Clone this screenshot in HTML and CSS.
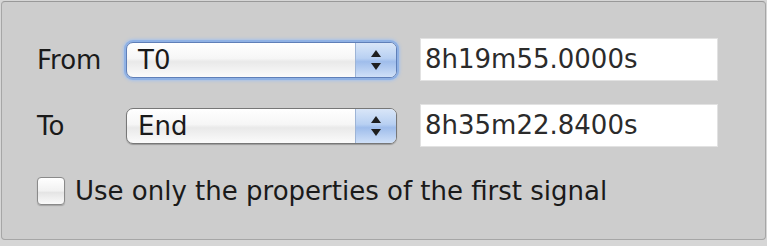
FILE: index.html
```html
<!DOCTYPE html>
<html lang="en">
<head>
  <meta charset="UTF-8">
  <title>Range</title>
  <link rel="stylesheet" href="styles.css">
</head>
<body>

  <div class="panel">
    <div class="fila">
      <span class="etiqueta">From</span>
      <div class="popup foco">
        <span class="valor">T0</span>
        <span class="flechas"><i class="arriba"></i><i class="abajo"></i></span>
      </div>
      <div class="campo">8h19m55.0000s</div>
    </div>

    <div class="fila">
      <span class="etiqueta">To</span>
      <div class="popup">
        <span class="valor">End</span>
        <span class="flechas"><i class="arriba"></i><i class="abajo"></i></span>
      </div>
      <div class="campo">8h35m22.8400s</div>
    </div>

    <label class="opcion">
      <span class="caja"></span>
      Use only the properties of the first signal
    </label>
  </div>

</body>
</html>
```

FILE: styles.css
```css
body {
  margin: 0;
  padding: 0;
  background-color: #d6d6d6;
  font-family: "DejaVu Sans", Verdana, sans-serif;
  font-size: 26px;
  color: #1a1a1a;
}

.panel {
  margin: 1px 1px 3px 1px;
  height: 239px;
  box-sizing: border-box;
  background-color: #cdcdcd;
  border: 1px solid #a6a6a6;
  border-top-color: #999;
  border-radius: 4px;
  padding: 36px 0 0 35px;
}

.fila {
  display: flex;
  align-items: center;
  height: 43px;
  margin-bottom: 23px;
}

.etiqueta {
  width: 89px;
}

.popup {
  width: 271px;
  height: 36px;
  box-sizing: border-box;
  display: flex;
  border: 1px solid #777;
  border-radius: 7px;
  background: linear-gradient(#ffffff, #f6f6f6 45%, #e9e9e9 55%, #fbfbfb);
  box-shadow: 0 1px 1px rgba(0, 0, 0, 0.25);
  overflow: hidden;
}

.popup.foco {
  box-shadow: 0 0 0 2px #8fb1e4, 0 0 3px 3px #a9c3ea;
  border-color: #5f7fb8;
}

.valor {
  flex: 1;
  padding-left: 11px;
  line-height: 34px;
}

.flechas {
  width: 40px;
  display: flex;
  flex-direction: column;
  align-items: center;
  justify-content: center;
  gap: 6px;
  background: linear-gradient(#d9e6f8, #b8d0f2 45%, #9fbdeb 55%, #cfe0f8);
  border-left: 1px solid #9db4d6;
}

.arriba, .abajo {
  width: 0;
  height: 0;
  border-left: 5px solid transparent;
  border-right: 5px solid transparent;
}

.arriba {
  border-bottom: 7px solid #1e1e1e;
}

.abajo {
  border-top: 7px solid #1e1e1e;
}

.campo {
  margin-left: 23px;
  width: 298px;
  height: 43px;
  box-sizing: border-box;
  background: #fff;
  border: 1px solid #e2e2e2;
  padding-left: 4px;
  line-height: 41px;
  color: #2b2b2b;
}

.opcion {
  display: flex;
  align-items: center;
  margin-top: 29px;
}

.caja {
  width: 28px;
  height: 28px;
  box-sizing: border-box;
  border: 1px solid #8a8a8a;
  border-radius: 4px;
  background: linear-gradient(#ffffff, #f1f1f1 50%, #e4e4e4 55%, #fafafa);
  box-shadow: 0 1px 1px rgba(0, 0, 0, 0.2);
  margin-right: 10px;
}
```
